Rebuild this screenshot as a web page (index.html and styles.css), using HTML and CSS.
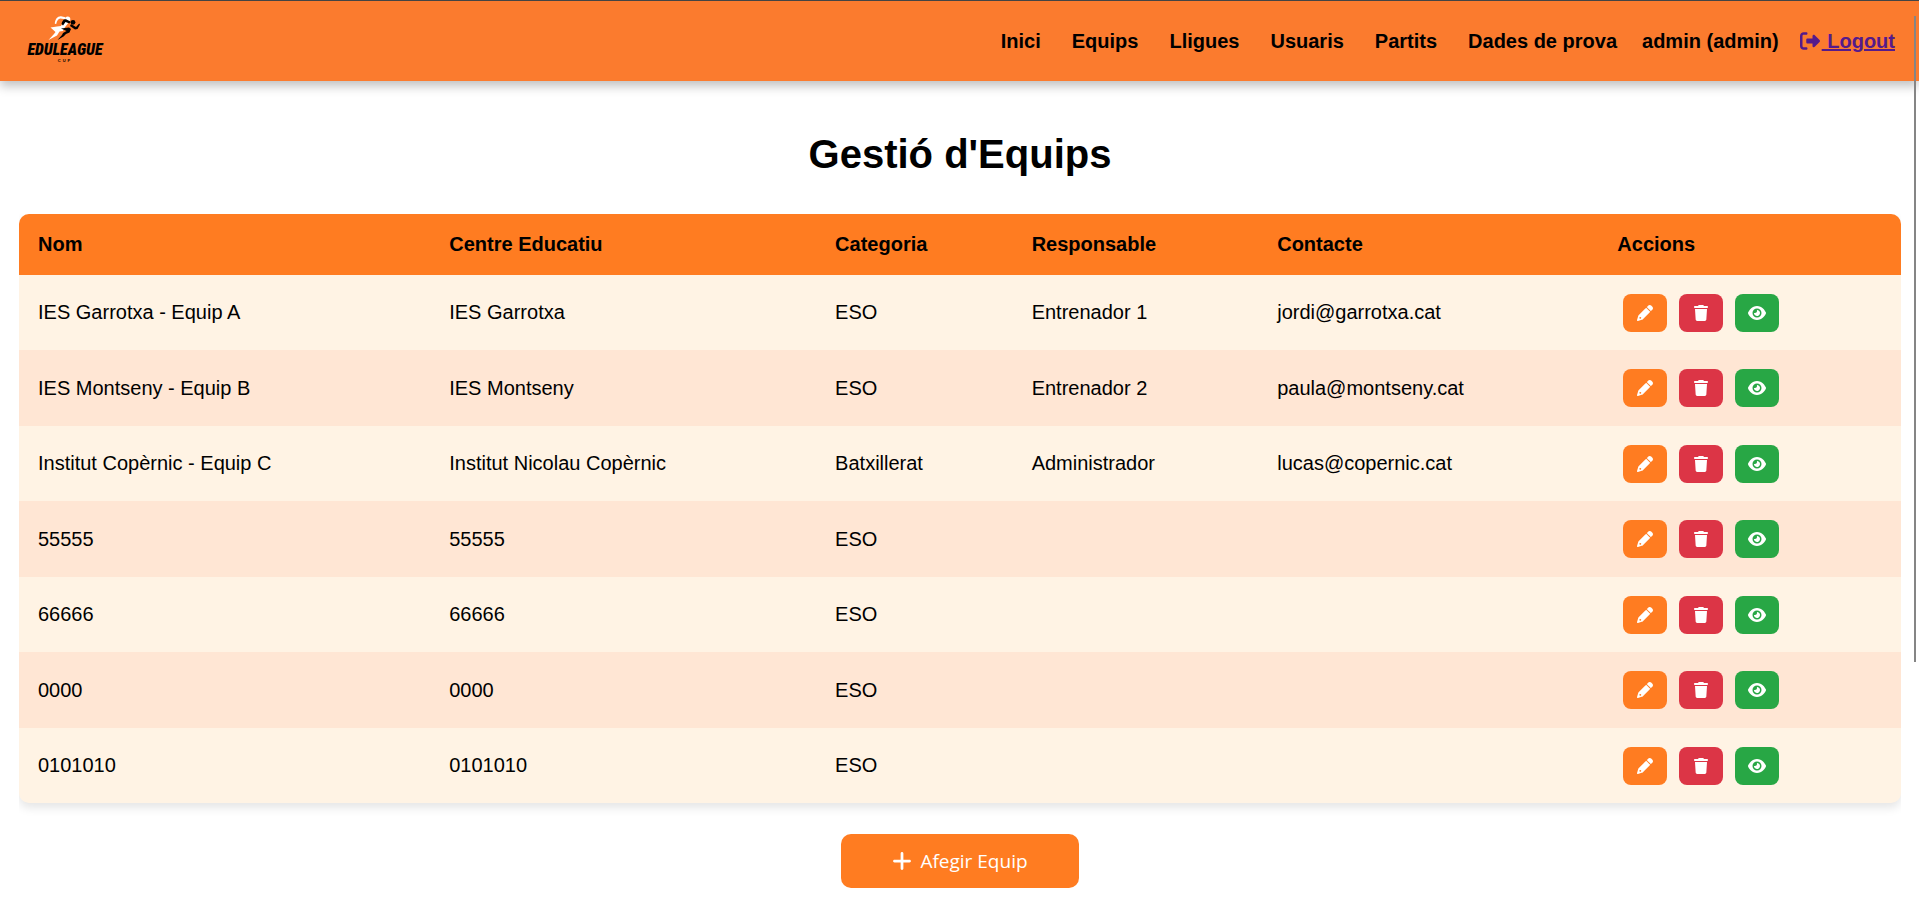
FILE: index.html
```html
<!DOCTYPE html>
<html lang="ca">
<head>
<meta charset="UTF-8">
<meta name="viewport" content="width=device-width, initial-scale=1.0">
<title>Gestió d'Equips</title>
<link rel="stylesheet" href="styles.css">
</head>

<body>

<!-- Icons -->
<svg class="icon-defs" aria-hidden="true">
  <symbol id="icon-logout" viewBox="0 0 512 512"><path d="M377.9 105.9L500.7 228.7c7.2 7.2 11.3 17.1 11.3 27.3s-4.1 20.1-11.3 27.3L377.9 406.1c-6.4 6.4-15 9.9-24 9.9c-18.7 0-33.9-15.2-33.9-33.9l0-62.1-128 0c-17.7 0-32-14.3-32-32l0-64c0-17.7 14.3-32 32-32l128 0 0-62.1c0-18.7 15.2-33.9 33.9-33.9c9 0 17.6 3.6 24 9.9zM160 96L96 96c-17.7 0-32 14.3-32 32l0 256c0 17.7 14.3 32 32 32l64 0c17.7 0 32 14.3 32 32s-14.3 32-32 32l-64 0c-53 0-96-43-96-96L0 128C0 75 43 32 96 32l64 0c17.7 0 32 14.3 32 32s-14.3 32-32 32z"/></symbol>
  <symbol id="icon-edit" viewBox="0 0 512 512"><path d="M410.3 231l11.3-11.3-33.9-33.9-62.1-62.1L291.7 89.8l-11.3 11.3-22.6 22.6L58.6 322.9c-10.4 10.4-18 23.3-22.2 37.4L1 480.7c-2.5 8.4-.2 17.5 6.1 23.7s15.3 8.5 23.7 6.1l120.3-35.4c14.1-4.2 27-11.8 37.4-22.2L387.7 253.7 410.3 231zM105 380a30 30 0 1 1 0 60 30 30 0 1 1 0-60zM362.700 18.700L348.300 33.200 325.700 55.800 314.300 67.100l33.900 33.900 62.100 62.100 33.900 33.900 11.300-11.300 22.600-22.600 14.500-14.500c25-25 25-65.500 0-90.500L453.300 18.700c-25-25-65.500-25-90.500 0z" fill-rule="evenodd"/></symbol>
  <symbol id="icon-delete" viewBox="0 0 448 512"><path d="M135.2 17.7L128 32 32 32C14.3 32 0 46.3 0 64S14.3 96 32 96l384 0c17.7 0 32-14.3 32-32s-14.3-32-32-32l-96 0-7.2-14.3C307.4 6.8 296.3 0 284.2 0L163.8 0c-12.1 0-23.2 6.8-28.6 17.7zM416 128L32 128 53.2 467c1.6 25.3 22.6 45 47.9 45l245.8 0c25.3 0 46.3-19.7 47.9-45L416 128z"/></symbol>
  <symbol id="icon-view" viewBox="0 0 576 512"><path d="M288 32c-80.8 0-145.5 36.8-192.6 80.6C48.6 156 17.3 208 2.5 243.7c-3.3 7.9-3.3 16.7 0 24.6C17.3 304 48.6 356 95.4 399.4C142.5 443.2 207.2 480 288 480s145.5-36.8 192.6-80.6c46.8-43.5 78.1-95.4 93-131.1c3.3-7.9 3.3-16.7 0-24.6c-14.9-35.7-46.2-87.7-93-131.1C433.5 68.8 368.8 32 288 32zM144 256a144 144 0 1 1 288 0 144 144 0 1 1 -288 0zm144-64c0 35.3-28.7 64-64 64c-7.1 0-13.9-1.2-20.3-3.3c-5.5-1.8-11.9 1.6-11.7 7.4c.3 6.9 1.3 13.8 3.2 20.7c13.7 51.2 66.4 81.6 117.6 67.9s81.6-66.4 67.9-117.6c-11.1-41.5-47.8-69.4-88.6-71.1c-5.8-.2-9.2 6.1-7.4 11.7c2.1 6.4 3.3 13.2 3.3 20.3z"/></symbol>
  <symbol id="icon-plus" viewBox="0 0 448 512"><path d="M256 80c0-17.7-14.3-32-32-32s-32 14.3-32 32l0 144L48 224c-17.7 0-32 14.3-32 32s14.3 32 32 32l144 0 0 144c0 17.7 14.3 32 32 32s32-14.3 32-32l0-144 144 0c17.7 0 32-14.3 32-32s-14.3-32-32-32l-144 0 0-144z"/></symbol>
</svg>

<header>
  <a class="logo" href="#">
    <svg class="logo-runners" viewBox="0 0 34 26" aria-hidden="true">
      <g fill="#fff">
        <path d="M6.8 8.8C7 4 9.5 1 13 1.2l4.5 1-.6 2-4.4-.6C10 3.8 9 6 8.2 9z"/>
        <circle cx="19.7" cy="4" r="2.6"/>
        <path d="M17 4l4 3-5 6.5-1 2.5-3.5.5-2.5 4L.5 25l5.5-6 1.500-2L2.500 12.500 9 11.500 13 11z"/>
      </g>
      <g fill="#000">
        <path d="M13.5 9C14 6 15.5 3.8 18 4.2l4.5 2.3-1 2-4-1.500-2.500 3.500z"/>
        <circle cx="25" cy="7.3" r="2.4"/>
        <path d="M23 9l5 3 3.2-3.5.8 1-2.5 4.5-2.5.5-5-3.5z"/>
        <path d="M13 13.500l8-1 2 1.500-1.500 3.500-3.500 1.500-2.500 2.500-6 3.500 4.500-5 1-2 3.500-2z"/>
      </g>
    </svg>
    <span class="logo-name">EDULEAGUE</span>
    <span class="logo-sub">CUP</span>
  </a>
  <nav>
    <a href="#">Inici</a>
    <a href="#">Equips</a>
    <a href="#">Lligues</a>
    <a href="#">Usuaris</a>
    <a href="#">Partits</a>
    <a href="#">Dades de prova</a>
  </nav>
  <span class="user">admin (admin)</span>
  <a class="logout" href="#"><svg class="icon" aria-hidden="true"><use href="#icon-logout"/></svg> Logout</a>
</header>

<main>
  <h1>Gestió d'Equips</h1>

  <div class="table-wrap">
    <table>
      <thead>
        <tr>
          <th>Nom</th>
          <th>Centre Educatiu</th>
          <th>Categoria</th>
          <th>Responsable</th>
          <th>Contacte</th>
          <th>Accions</th>
        </tr>
      </thead>
      <tbody id="teamList"></tbody>
    </table>
  </div>

  <button class="add-button" type="button"><svg class="icon" aria-hidden="true"><use href="#icon-plus"/></svg>Afegir Equip</button>
</main>

<div class="scroll-thumb"></div>

<script>
  const teams = [
    ['IES Garrotxa - Equip A', 'IES Garrotxa', 'ESO', 'Entrenador 1', 'jordi@garrotxa.cat'],
    ['IES Montseny - Equip B', 'IES Montseny', 'ESO', 'Entrenador 2', 'paula@montseny.cat'],
    ['Institut Copèrnic - Equip C', 'Institut Nicolau Copèrnic', 'Batxillerat', 'Administrador', 'lucas@copernic.cat'],
    ['55555', '55555', 'ESO', '', ''],
    ['66666', '66666', 'ESO', '', ''],
    ['0000', '0000', 'ESO', '', ''],
    ['0101010', '0101010', 'ESO', '', '']
  ];

  const actions = [
    ['edit', 'Editar'],
    ['delete', 'Eliminar'],
    ['view', 'Veure']
  ];

  const buttons = actions.map(([name, label]) =>
    `<button type="button" class="action ${name}" aria-label="${label}"><svg class="icon"><use href="#icon-${name}"/></svg></button>`
  ).join('');

  document.getElementById('teamList').innerHTML = teams.map(team =>
    `<tr>${team.map(value => `<td>${value}</td>`).join('')}<td><div class="actions">${buttons}</div></td></tr>`
  ).join('');
</script>

</body>
</html>
```

FILE: styles.css
```css
* { margin: 0; padding: 0; box-sizing: border-box; }
body { font-family: "Liberation Sans", Arial, sans-serif; font-size: 20px; line-height: 23px; background-color: #fff; color: #000; border-top: 1px solid #444; }
.icon-defs { display: none; }
.icon { fill: currentColor; }

header { display: flex; align-items: center; height: 80px; padding: 0 24px 4px 27px; background-color: #fb7b2e; font-weight: bold; box-shadow: 0 5px 10px rgba(0, 0, 0, 0.25); }
header a { color: #000; text-decoration: none; }
.logo { display: flex; flex-direction: column; align-items: center; width: 76px; margin-right: auto; }
.logo-runners { width: 34px; height: 26px; }
.logo-name { font-family: "Roboto Condensed", "Open Sans Condensed", Roboto, sans-serif; font-size: 16px; line-height: 18px; font-weight: 900; font-style: italic; }
.logo-sub { font-size: 4px; line-height: 4px; letter-spacing: 2px; }
nav { display: flex; gap: 31px; margin-right: 25px; }
nav, .user, .logout { padding-top: 4px; }
.user { margin-right: 20px; }
header .logout { color: #551a8b; text-decoration: underline; }
.logout .icon { width: 22px; height: 20px; margin-right: 1px; vertical-align: -3px; }

main { display: flex; flex-direction: column; align-items: center; padding: 50px 18px 25px 19px; }
h1 { font-size: 40px; line-height: 46px; margin-bottom: 37px; }
.table-wrap { width: 100%; padding-bottom: 16px; overflow: hidden; }
table { width: 100%; border-collapse: collapse; border-radius: 10px; overflow: hidden; background-color: #fff3e4; box-shadow: 0 5px 10px rgba(0, 0, 0, 0.1); }
th, td { padding: 0 18px 0 19px; text-align: left; }
th { height: 61px; background-color: #ff7c21; }
td { height: 75px; }
tbody tr:nth-child(even) { background-color: #ffe6d4; }
tbody tr:nth-child(even) td { height: 76px; }

.actions { display: flex; gap: 12px; padding-left: 6px; }
.action { display: flex; justify-content: center; align-items: center; width: 44px; height: 38px; border: none; border-radius: 8px; color: #fff; cursor: pointer; }
.action .icon { width: 18px; height: 16px; }
.edit { background-color: #ff7c21; }
.delete { background-color: #dc3546; }
.view { background-color: #28a745; }

.add-button { display: flex; justify-content: center; align-items: center; gap: 8px; width: 238px; height: 54px; margin-top: 15px; border: none; border-radius: 10px; background-color: #ff7c21; color: #fff; font-family: "Open Sans", "Noto Sans", sans-serif; font-size: 19px; cursor: pointer; }
.add-button .icon { width: 20px; height: 22px; }

.scroll-thumb { position: fixed; top: 16px; right: 3px; width: 2px; height: 646px; background-color: #858585; }
```
